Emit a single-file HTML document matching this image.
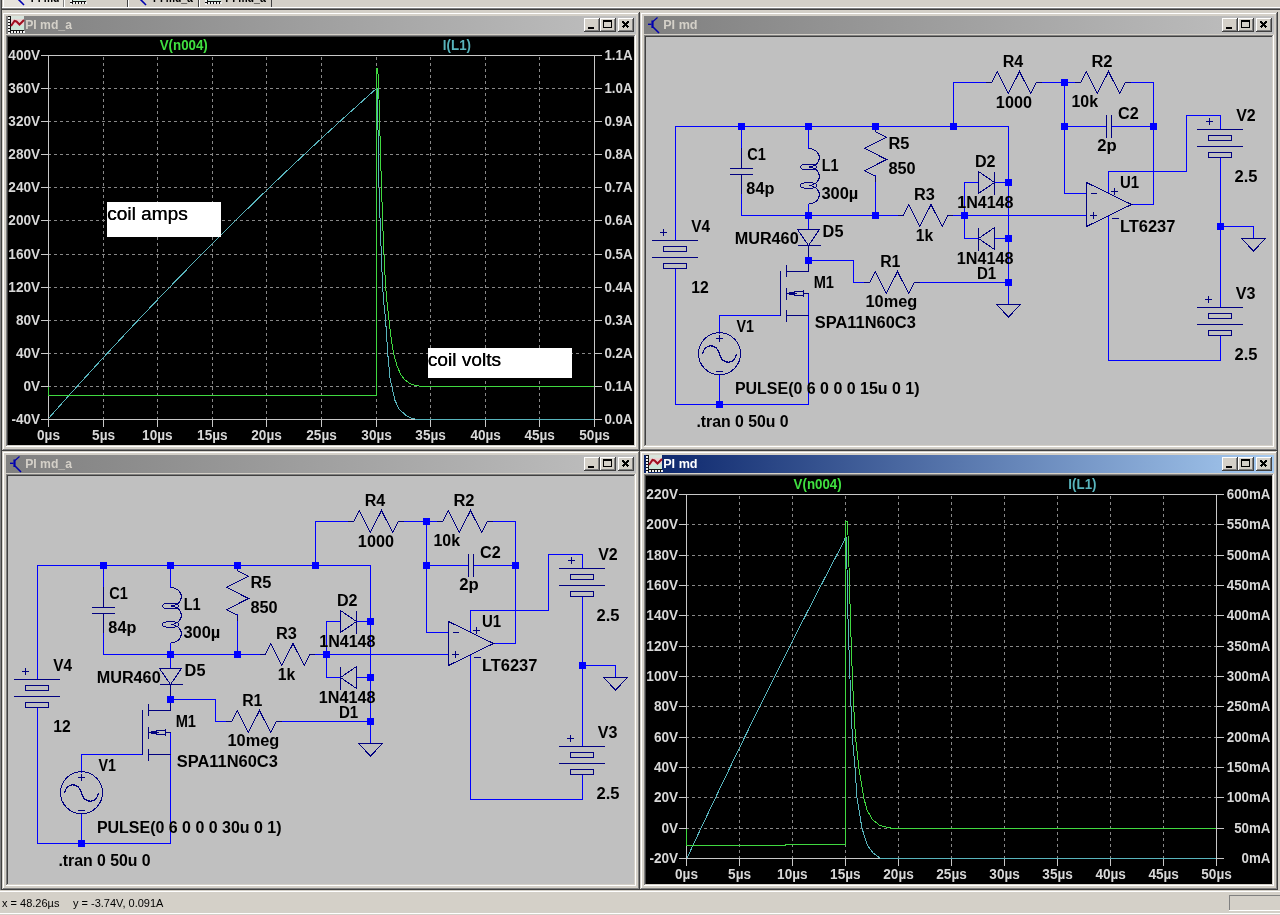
<!DOCTYPE html><html><head><meta charset="utf-8"><title>LTspice</title><style>html,body{margin:0;padding:0;width:1280px;height:915px;overflow:hidden;background:#d4d0c8;}svg text{font-family:"Liberation Sans",sans-serif;}</style></head><body><div style="position:absolute;left:0;top:0;width:1280px;height:915px;will-change:transform"><svg width="1280" height="915" viewBox="0 0 1280 915" shape-rendering="crispEdges" font-family='"Liberation Sans", sans-serif' style="position:absolute;left:0;top:0;display:block"><rect x="0" y="0" width="1280" height="915" fill="#d4d0c8"/><rect x="3" y="0" width="61" height="7" fill="#e6e3dd"/><rect x="3" y="0" width="1" height="7" fill="#ffffff"/><rect x="63" y="0" width="1" height="7" fill="#808080"/><rect x="64" y="0" width="64" height="7" fill="#d4d0c8"/><rect x="64" y="0" width="1" height="7" fill="#ffffff"/><rect x="127" y="0" width="1" height="7" fill="#404040"/><rect x="128" y="0" width="71" height="7" fill="#d4d0c8"/><rect x="128" y="0" width="1" height="7" fill="#ffffff"/><rect x="198" y="0" width="1" height="7" fill="#404040"/><rect x="199" y="0" width="73" height="7" fill="#d4d0c8"/><rect x="199" y="0" width="1" height="7" fill="#ffffff"/><rect x="271" y="0" width="1" height="7" fill="#404040"/><rect x="2" y="7" width="1278" height="1" fill="#ffffff"/><rect x="2" y="8" width="1278" height="1" fill="#808080"/><rect x="0" y="9" width="1280" height="1" fill="#404040"/><rect x="0" y="0" width="1" height="892" fill="#808080"/><rect x="1" y="0" width="1" height="892" fill="#404040"/><g transform="translate(13,-11)" fill="none" stroke="#0000b0" shape-rendering="auto"><path d="M9.5 0.5 L5 4.5" stroke-width="1.2"/><path d="M4.5 3.5 L4.5 11" stroke-width="2.2"/><path d="M5 10 L11 16" stroke-width="1.6"/><path d="M0 7.3 L3.5 7.3" stroke-width="1.4"/></g><text x="30.80" y="2.00" font-size="12" fill="#000" font-weight="bold" textLength="28.59" lengthAdjust="spacingAndGlyphs">PI md</text><g transform="translate(70,-13)" shape-rendering="crispEdges"><rect x="0" y="0" width="16" height="17" fill="#101010"/><rect x="3" y="0" width="13" height="14" fill="#e8d4d4"/><rect x="3" y="0" width="13" height="3" fill="#d8e4dc"/><rect x="3" y="9" width="13" height="5" fill="#cce6d8"/><rect x="0" y="1" width="2" height="2" fill="#f0f0f0"/><rect x="0" y="4" width="2" height="2" fill="#f0f0f0"/><rect x="0" y="7" width="2" height="2" fill="#f0f0f0"/><rect x="0" y="10" width="2" height="2" fill="#f0f0f0"/><rect x="0" y="13" width="2" height="2" fill="#f0f0f0"/><rect x="0" y="16" width="2" height="2" fill="#f0f0f0"/><rect x="3" y="15" width="2" height="2" fill="#f0f0f0"/><rect x="6" y="15" width="2" height="2" fill="#f0f0f0"/><rect x="9" y="15" width="2" height="2" fill="#f0f0f0"/><rect x="12" y="15" width="2" height="2" fill="#f0f0f0"/><rect x="15" y="15" width="2" height="2" fill="#f0f0f0"/></g><polyline points="73,-3 76.5,-8 78.5,-7.5 81.5,-4.5 86,-9" fill="none" stroke="#a01020" stroke-width="2" shape-rendering="auto"/><g transform="translate(135,-11)" fill="none" stroke="#0000b0" shape-rendering="auto"><path d="M9.5 0.5 L5 4.5" stroke-width="1.2"/><path d="M4.5 3.5 L4.5 11" stroke-width="2.2"/><path d="M5 10 L11 16" stroke-width="1.6"/><path d="M0 7.3 L3.5 7.3" stroke-width="1.4"/></g><text x="152.95" y="2.00" font-size="12" fill="#000" font-weight="bold" textLength="39.98" lengthAdjust="spacingAndGlyphs">PI md_a</text><g transform="translate(205,-13)" shape-rendering="crispEdges"><rect x="0" y="0" width="16" height="17" fill="#101010"/><rect x="3" y="0" width="13" height="14" fill="#e8d4d4"/><rect x="3" y="0" width="13" height="3" fill="#d8e4dc"/><rect x="3" y="9" width="13" height="5" fill="#cce6d8"/><rect x="0" y="1" width="2" height="2" fill="#f0f0f0"/><rect x="0" y="4" width="2" height="2" fill="#f0f0f0"/><rect x="0" y="7" width="2" height="2" fill="#f0f0f0"/><rect x="0" y="10" width="2" height="2" fill="#f0f0f0"/><rect x="0" y="13" width="2" height="2" fill="#f0f0f0"/><rect x="0" y="16" width="2" height="2" fill="#f0f0f0"/><rect x="3" y="15" width="2" height="2" fill="#f0f0f0"/><rect x="6" y="15" width="2" height="2" fill="#f0f0f0"/><rect x="9" y="15" width="2" height="2" fill="#f0f0f0"/><rect x="12" y="15" width="2" height="2" fill="#f0f0f0"/><rect x="15" y="15" width="2" height="2" fill="#f0f0f0"/></g><polyline points="208,-3 211.5,-8 213.5,-7.5 216.5,-4.5 221,-9" fill="none" stroke="#a01020" stroke-width="2" shape-rendering="auto"/><text x="225.20" y="2.00" font-size="12" fill="#000" font-weight="bold" textLength="40.73" lengthAdjust="spacingAndGlyphs">PI md_a</text><defs><linearGradient id="ga" x1="0" x2="1" y1="0" y2="0"><stop offset="0" stop-color="#0a246a"/><stop offset="1" stop-color="#a6caf0"/></linearGradient><linearGradient id="gi" x1="0" x2="1" y1="0" y2="0"><stop offset="0" stop-color="#808080"/><stop offset="1" stop-color="#c0c0c0"/></linearGradient></defs><rect x="2" y="12" width="638" height="439" fill="#d4d0c8"/><rect x="2" y="12" width="638" height="1" fill="#d4d0c8"/><rect x="2" y="12" width="1" height="439" fill="#d4d0c8"/><rect x="3" y="13" width="636" height="1" fill="#ffffff"/><rect x="3" y="13" width="1" height="437" fill="#ffffff"/><rect x="2" y="450" width="638" height="1" fill="#404040"/><rect x="639" y="12" width="1" height="439" fill="#404040"/><rect x="3" y="449" width="636" height="1" fill="#808080"/><rect x="638" y="13" width="1" height="437" fill="#808080"/><rect x="6" y="16" width="630" height="18" fill="url(#gi)"/><g transform="translate(8,16)" shape-rendering="crispEdges"><rect x="0" y="0" width="16" height="17" fill="#101010"/><rect x="3" y="0" width="13" height="14" fill="#e8d4d4"/><rect x="3" y="0" width="13" height="3" fill="#d8e4dc"/><rect x="3" y="9" width="13" height="5" fill="#cce6d8"/><rect x="0" y="1" width="2" height="2" fill="#f0f0f0"/><rect x="0" y="4" width="2" height="2" fill="#f0f0f0"/><rect x="0" y="7" width="2" height="2" fill="#f0f0f0"/><rect x="0" y="10" width="2" height="2" fill="#f0f0f0"/><rect x="0" y="13" width="2" height="2" fill="#f0f0f0"/><rect x="0" y="16" width="2" height="2" fill="#f0f0f0"/><rect x="3" y="15" width="2" height="2" fill="#f0f0f0"/><rect x="6" y="15" width="2" height="2" fill="#f0f0f0"/><rect x="9" y="15" width="2" height="2" fill="#f0f0f0"/><rect x="12" y="15" width="2" height="2" fill="#f0f0f0"/><rect x="15" y="15" width="2" height="2" fill="#f0f0f0"/></g><polyline points="11,26 14.5,21 16.5,21.5 19.5,24.5 24,20" fill="none" stroke="#a01020" stroke-width="2" shape-rendering="auto"/><text x="25.20" y="29.00" font-size="12" fill="#d4d0c8" font-weight="bold" textLength="46.73" lengthAdjust="spacingAndGlyphs">PI md_a</text><rect x="584" y="18" width="16" height="14" fill="#d4d0c8"/><rect x="584" y="18" width="16" height="1" fill="#ffffff"/><rect x="584" y="18" width="1" height="14" fill="#ffffff"/><rect x="584" y="31" width="16" height="1" fill="#404040"/><rect x="599" y="18" width="1" height="14" fill="#404040"/><rect x="585" y="30" width="14" height="1" fill="#808080"/><rect x="598" y="19" width="1" height="12" fill="#808080"/><rect x="588" y="27" width="6" height="2" fill="#000"/><rect x="600" y="18" width="16" height="14" fill="#d4d0c8"/><rect x="600" y="18" width="16" height="1" fill="#ffffff"/><rect x="600" y="18" width="1" height="14" fill="#ffffff"/><rect x="600" y="31" width="16" height="1" fill="#404040"/><rect x="615" y="18" width="1" height="14" fill="#404040"/><rect x="601" y="30" width="14" height="1" fill="#808080"/><rect x="614" y="19" width="1" height="12" fill="#808080"/><rect x="603.5" y="20.5" width="8" height="7" fill="none" stroke="#000" stroke-width="1"/><rect x="603" y="20" width="9" height="2" fill="#000"/><rect x="618" y="18" width="16" height="14" fill="#d4d0c8"/><rect x="618" y="18" width="16" height="1" fill="#ffffff"/><rect x="618" y="18" width="1" height="14" fill="#ffffff"/><rect x="618" y="31" width="16" height="1" fill="#404040"/><rect x="633" y="18" width="1" height="14" fill="#404040"/><rect x="619" y="30" width="14" height="1" fill="#808080"/><rect x="632" y="19" width="1" height="12" fill="#808080"/><path d="M622.5 21.5 L628.5 27.5 M628.5 21.5 L622.5 27.5" stroke="#000" stroke-width="1.5"/><rect x="6" y="35" width="630" height="1" fill="#808080"/><rect x="6" y="35" width="1" height="412" fill="#808080"/><rect x="7" y="36" width="628" height="1" fill="#404040"/><rect x="7" y="36" width="1" height="410" fill="#404040"/><rect x="6" y="446" width="630" height="1" fill="#ffffff"/><rect x="635" y="35" width="1" height="412" fill="#ffffff"/><rect x="7" y="445" width="628" height="1" fill="#d4d0c8"/><rect x="634" y="36" width="1" height="410" fill="#d4d0c8"/><rect x="640" y="12" width="638" height="439" fill="#d4d0c8"/><rect x="640" y="12" width="638" height="1" fill="#d4d0c8"/><rect x="640" y="12" width="1" height="439" fill="#d4d0c8"/><rect x="641" y="13" width="636" height="1" fill="#ffffff"/><rect x="641" y="13" width="1" height="437" fill="#ffffff"/><rect x="640" y="450" width="638" height="1" fill="#404040"/><rect x="1277" y="12" width="1" height="439" fill="#404040"/><rect x="641" y="449" width="636" height="1" fill="#808080"/><rect x="1276" y="13" width="1" height="437" fill="#808080"/><rect x="644" y="16" width="630" height="18" fill="url(#gi)"/><g transform="translate(648,17)" fill="none" stroke="#0000b0" shape-rendering="auto"><path d="M9.5 0.5 L5 4.5" stroke-width="1.2"/><path d="M4.5 3.5 L4.5 11" stroke-width="2.2"/><path d="M5 10 L11 16" stroke-width="1.6"/><path d="M0 7.3 L3.5 7.3" stroke-width="1.4"/></g><text x="663.20" y="29.00" font-size="12" fill="#d4d0c8" font-weight="bold" textLength="34.39" lengthAdjust="spacingAndGlyphs">PI md</text><rect x="1222" y="18" width="16" height="14" fill="#d4d0c8"/><rect x="1222" y="18" width="16" height="1" fill="#ffffff"/><rect x="1222" y="18" width="1" height="14" fill="#ffffff"/><rect x="1222" y="31" width="16" height="1" fill="#404040"/><rect x="1237" y="18" width="1" height="14" fill="#404040"/><rect x="1223" y="30" width="14" height="1" fill="#808080"/><rect x="1236" y="19" width="1" height="12" fill="#808080"/><rect x="1226" y="27" width="6" height="2" fill="#000"/><rect x="1238" y="18" width="16" height="14" fill="#d4d0c8"/><rect x="1238" y="18" width="16" height="1" fill="#ffffff"/><rect x="1238" y="18" width="1" height="14" fill="#ffffff"/><rect x="1238" y="31" width="16" height="1" fill="#404040"/><rect x="1253" y="18" width="1" height="14" fill="#404040"/><rect x="1239" y="30" width="14" height="1" fill="#808080"/><rect x="1252" y="19" width="1" height="12" fill="#808080"/><rect x="1241.5" y="20.5" width="8" height="7" fill="none" stroke="#000" stroke-width="1"/><rect x="1241" y="20" width="9" height="2" fill="#000"/><rect x="1256" y="18" width="16" height="14" fill="#d4d0c8"/><rect x="1256" y="18" width="16" height="1" fill="#ffffff"/><rect x="1256" y="18" width="1" height="14" fill="#ffffff"/><rect x="1256" y="31" width="16" height="1" fill="#404040"/><rect x="1271" y="18" width="1" height="14" fill="#404040"/><rect x="1257" y="30" width="14" height="1" fill="#808080"/><rect x="1270" y="19" width="1" height="12" fill="#808080"/><path d="M1260.5 21.5 L1266.5 27.5 M1266.5 21.5 L1260.5 27.5" stroke="#000" stroke-width="1.5"/><rect x="644" y="35" width="630" height="1" fill="#808080"/><rect x="644" y="35" width="1" height="412" fill="#808080"/><rect x="645" y="36" width="628" height="1" fill="#404040"/><rect x="645" y="36" width="1" height="410" fill="#404040"/><rect x="644" y="446" width="630" height="1" fill="#ffffff"/><rect x="1273" y="35" width="1" height="412" fill="#ffffff"/><rect x="645" y="445" width="628" height="1" fill="#d4d0c8"/><rect x="1272" y="36" width="1" height="410" fill="#d4d0c8"/><rect x="2" y="451" width="638" height="439" fill="#d4d0c8"/><rect x="2" y="451" width="638" height="1" fill="#d4d0c8"/><rect x="2" y="451" width="1" height="439" fill="#d4d0c8"/><rect x="3" y="452" width="636" height="1" fill="#ffffff"/><rect x="3" y="452" width="1" height="437" fill="#ffffff"/><rect x="2" y="889" width="638" height="1" fill="#404040"/><rect x="639" y="451" width="1" height="439" fill="#404040"/><rect x="3" y="888" width="636" height="1" fill="#808080"/><rect x="638" y="452" width="1" height="437" fill="#808080"/><rect x="6" y="455" width="630" height="18" fill="url(#gi)"/><g transform="translate(10,456)" fill="none" stroke="#0000b0" shape-rendering="auto"><path d="M9.5 0.5 L5 4.5" stroke-width="1.2"/><path d="M4.5 3.5 L4.5 11" stroke-width="2.2"/><path d="M5 10 L11 16" stroke-width="1.6"/><path d="M0 7.3 L3.5 7.3" stroke-width="1.4"/></g><text x="25.20" y="468.00" font-size="12" fill="#d4d0c8" font-weight="bold" textLength="46.73" lengthAdjust="spacingAndGlyphs">PI md_a</text><rect x="584" y="457" width="16" height="14" fill="#d4d0c8"/><rect x="584" y="457" width="16" height="1" fill="#ffffff"/><rect x="584" y="457" width="1" height="14" fill="#ffffff"/><rect x="584" y="470" width="16" height="1" fill="#404040"/><rect x="599" y="457" width="1" height="14" fill="#404040"/><rect x="585" y="469" width="14" height="1" fill="#808080"/><rect x="598" y="458" width="1" height="12" fill="#808080"/><rect x="588" y="466" width="6" height="2" fill="#000"/><rect x="600" y="457" width="16" height="14" fill="#d4d0c8"/><rect x="600" y="457" width="16" height="1" fill="#ffffff"/><rect x="600" y="457" width="1" height="14" fill="#ffffff"/><rect x="600" y="470" width="16" height="1" fill="#404040"/><rect x="615" y="457" width="1" height="14" fill="#404040"/><rect x="601" y="469" width="14" height="1" fill="#808080"/><rect x="614" y="458" width="1" height="12" fill="#808080"/><rect x="603.5" y="459.5" width="8" height="7" fill="none" stroke="#000" stroke-width="1"/><rect x="603" y="459" width="9" height="2" fill="#000"/><rect x="618" y="457" width="16" height="14" fill="#d4d0c8"/><rect x="618" y="457" width="16" height="1" fill="#ffffff"/><rect x="618" y="457" width="1" height="14" fill="#ffffff"/><rect x="618" y="470" width="16" height="1" fill="#404040"/><rect x="633" y="457" width="1" height="14" fill="#404040"/><rect x="619" y="469" width="14" height="1" fill="#808080"/><rect x="632" y="458" width="1" height="12" fill="#808080"/><path d="M622.5 460.5 L628.5 466.5 M628.5 460.5 L622.5 466.5" stroke="#000" stroke-width="1.5"/><rect x="6" y="474" width="630" height="1" fill="#808080"/><rect x="6" y="474" width="1" height="412" fill="#808080"/><rect x="7" y="475" width="628" height="1" fill="#404040"/><rect x="7" y="475" width="1" height="410" fill="#404040"/><rect x="6" y="885" width="630" height="1" fill="#ffffff"/><rect x="635" y="474" width="1" height="412" fill="#ffffff"/><rect x="7" y="884" width="628" height="1" fill="#d4d0c8"/><rect x="634" y="475" width="1" height="410" fill="#d4d0c8"/><rect x="640" y="451" width="638" height="439" fill="#d4d0c8"/><rect x="640" y="451" width="638" height="1" fill="#d4d0c8"/><rect x="640" y="451" width="1" height="439" fill="#d4d0c8"/><rect x="641" y="452" width="636" height="1" fill="#ffffff"/><rect x="641" y="452" width="1" height="437" fill="#ffffff"/><rect x="640" y="889" width="638" height="1" fill="#404040"/><rect x="1277" y="451" width="1" height="439" fill="#404040"/><rect x="641" y="888" width="636" height="1" fill="#808080"/><rect x="1276" y="452" width="1" height="437" fill="#808080"/><rect x="644" y="455" width="630" height="18" fill="url(#ga)"/><g transform="translate(646,455)" shape-rendering="crispEdges"><rect x="0" y="0" width="16" height="17" fill="#101010"/><rect x="3" y="0" width="13" height="14" fill="#e8d4d4"/><rect x="3" y="0" width="13" height="3" fill="#d8e4dc"/><rect x="3" y="9" width="13" height="5" fill="#cce6d8"/><rect x="0" y="1" width="2" height="2" fill="#f0f0f0"/><rect x="0" y="4" width="2" height="2" fill="#f0f0f0"/><rect x="0" y="7" width="2" height="2" fill="#f0f0f0"/><rect x="0" y="10" width="2" height="2" fill="#f0f0f0"/><rect x="0" y="13" width="2" height="2" fill="#f0f0f0"/><rect x="0" y="16" width="2" height="2" fill="#f0f0f0"/><rect x="3" y="15" width="2" height="2" fill="#f0f0f0"/><rect x="6" y="15" width="2" height="2" fill="#f0f0f0"/><rect x="9" y="15" width="2" height="2" fill="#f0f0f0"/><rect x="12" y="15" width="2" height="2" fill="#f0f0f0"/><rect x="15" y="15" width="2" height="2" fill="#f0f0f0"/></g><polyline points="649,465 652.5,460 654.5,460.5 657.5,463.5 662,459" fill="none" stroke="#a01020" stroke-width="2" shape-rendering="auto"/><text x="663.20" y="468.00" font-size="12" fill="#ffffff" font-weight="bold" textLength="34.39" lengthAdjust="spacingAndGlyphs">PI md</text><rect x="1222" y="457" width="16" height="14" fill="#d4d0c8"/><rect x="1222" y="457" width="16" height="1" fill="#ffffff"/><rect x="1222" y="457" width="1" height="14" fill="#ffffff"/><rect x="1222" y="470" width="16" height="1" fill="#404040"/><rect x="1237" y="457" width="1" height="14" fill="#404040"/><rect x="1223" y="469" width="14" height="1" fill="#808080"/><rect x="1236" y="458" width="1" height="12" fill="#808080"/><rect x="1226" y="466" width="6" height="2" fill="#000"/><rect x="1238" y="457" width="16" height="14" fill="#d4d0c8"/><rect x="1238" y="457" width="16" height="1" fill="#ffffff"/><rect x="1238" y="457" width="1" height="14" fill="#ffffff"/><rect x="1238" y="470" width="16" height="1" fill="#404040"/><rect x="1253" y="457" width="1" height="14" fill="#404040"/><rect x="1239" y="469" width="14" height="1" fill="#808080"/><rect x="1252" y="458" width="1" height="12" fill="#808080"/><rect x="1241.5" y="459.5" width="8" height="7" fill="none" stroke="#000" stroke-width="1"/><rect x="1241" y="459" width="9" height="2" fill="#000"/><rect x="1256" y="457" width="16" height="14" fill="#d4d0c8"/><rect x="1256" y="457" width="16" height="1" fill="#ffffff"/><rect x="1256" y="457" width="1" height="14" fill="#ffffff"/><rect x="1256" y="470" width="16" height="1" fill="#404040"/><rect x="1271" y="457" width="1" height="14" fill="#404040"/><rect x="1257" y="469" width="14" height="1" fill="#808080"/><rect x="1270" y="458" width="1" height="12" fill="#808080"/><path d="M1260.5 460.5 L1266.5 466.5 M1266.5 460.5 L1260.5 466.5" stroke="#000" stroke-width="1.5"/><rect x="644" y="474" width="630" height="1" fill="#808080"/><rect x="644" y="474" width="1" height="412" fill="#808080"/><rect x="645" y="475" width="628" height="1" fill="#404040"/><rect x="645" y="475" width="1" height="410" fill="#404040"/><rect x="644" y="885" width="630" height="1" fill="#ffffff"/><rect x="1273" y="474" width="1" height="412" fill="#ffffff"/><rect x="645" y="884" width="628" height="1" fill="#d4d0c8"/><rect x="1272" y="475" width="1" height="410" fill="#d4d0c8"/><rect x="8" y="37" width="626" height="408" fill="#000"/><line x1="48" y1="88.5" x2="594" y2="88.5" stroke="#888888" stroke-dasharray="3 3"/><line x1="48" y1="121.5" x2="594" y2="121.5" stroke="#888888" stroke-dasharray="3 3"/><line x1="48" y1="154.5" x2="594" y2="154.5" stroke="#888888" stroke-dasharray="3 3"/><line x1="48" y1="187.5" x2="594" y2="187.5" stroke="#888888" stroke-dasharray="3 3"/><line x1="48" y1="220.5" x2="594" y2="220.5" stroke="#888888" stroke-dasharray="3 3"/><line x1="48" y1="254.5" x2="594" y2="254.5" stroke="#888888" stroke-dasharray="3 3"/><line x1="48" y1="287.5" x2="594" y2="287.5" stroke="#888888" stroke-dasharray="3 3"/><line x1="48" y1="320.5" x2="594" y2="320.5" stroke="#888888" stroke-dasharray="3 3"/><line x1="48" y1="353.5" x2="594" y2="353.5" stroke="#888888" stroke-dasharray="3 3"/><line x1="48" y1="386.5" x2="594" y2="386.5" stroke="#888888" stroke-dasharray="3 3"/><line x1="103.5" y1="57" x2="103.5" y2="419" stroke="#888888" stroke-dasharray="3 3"/><line x1="157.5" y1="57" x2="157.5" y2="419" stroke="#888888" stroke-dasharray="3 3"/><line x1="212.5" y1="57" x2="212.5" y2="419" stroke="#888888" stroke-dasharray="3 3"/><line x1="266.5" y1="57" x2="266.5" y2="419" stroke="#888888" stroke-dasharray="3 3"/><line x1="321.5" y1="57" x2="321.5" y2="419" stroke="#888888" stroke-dasharray="3 3"/><line x1="376.5" y1="57" x2="376.5" y2="419" stroke="#888888" stroke-dasharray="3 3"/><line x1="430.5" y1="57" x2="430.5" y2="419" stroke="#888888" stroke-dasharray="3 3"/><line x1="485.5" y1="57" x2="485.5" y2="419" stroke="#888888" stroke-dasharray="3 3"/><line x1="539.5" y1="57" x2="539.5" y2="419" stroke="#888888" stroke-dasharray="3 3"/><rect x="48" y="55" width="547" height="1" fill="#c8c8c8"/><rect x="48" y="419" width="547" height="1" fill="#c8c8c8"/><rect x="48" y="55" width="1" height="365" fill="#c8c8c8"/><rect x="594" y="55" width="1" height="365" fill="#c8c8c8"/><rect x="41" y="55" width="7" height="1" fill="#c8c8c8"/><text x="8.37" y="60.00" font-size="14" fill="#d8d8d8" font-weight="bold" textLength="31.72" lengthAdjust="spacingAndGlyphs">400V</text><rect x="41" y="88" width="7" height="1" fill="#c8c8c8"/><text x="8.37" y="93.00" font-size="14" fill="#d8d8d8" font-weight="bold" textLength="31.73" lengthAdjust="spacingAndGlyphs">360V</text><rect x="41" y="121" width="7" height="1" fill="#c8c8c8"/><text x="8.37" y="126.00" font-size="14" fill="#d8d8d8" font-weight="bold" textLength="31.73" lengthAdjust="spacingAndGlyphs">320V</text><rect x="41" y="154" width="7" height="1" fill="#c8c8c8"/><text x="8.36" y="159.00" font-size="14" fill="#d8d8d8" font-weight="bold" textLength="31.73" lengthAdjust="spacingAndGlyphs">280V</text><rect x="41" y="187" width="7" height="1" fill="#c8c8c8"/><text x="8.36" y="192.00" font-size="14" fill="#d8d8d8" font-weight="bold" textLength="31.73" lengthAdjust="spacingAndGlyphs">240V</text><rect x="41" y="220" width="7" height="1" fill="#c8c8c8"/><text x="8.36" y="225.00" font-size="14" fill="#d8d8d8" font-weight="bold" textLength="31.73" lengthAdjust="spacingAndGlyphs">200V</text><rect x="41" y="254" width="7" height="1" fill="#c8c8c8"/><text x="8.35" y="259.00" font-size="14" fill="#d8d8d8" font-weight="bold" textLength="31.74" lengthAdjust="spacingAndGlyphs">160V</text><rect x="41" y="287" width="7" height="1" fill="#c8c8c8"/><text x="8.35" y="292.00" font-size="14" fill="#d8d8d8" font-weight="bold" textLength="31.74" lengthAdjust="spacingAndGlyphs">120V</text><rect x="41" y="320" width="7" height="1" fill="#c8c8c8"/><text x="15.92" y="325.00" font-size="14" fill="#d8d8d8" font-weight="bold" textLength="24.18" lengthAdjust="spacingAndGlyphs">80V</text><rect x="41" y="353" width="7" height="1" fill="#c8c8c8"/><text x="15.92" y="358.00" font-size="14" fill="#d8d8d8" font-weight="bold" textLength="24.17" lengthAdjust="spacingAndGlyphs">40V</text><rect x="41" y="386" width="7" height="1" fill="#c8c8c8"/><text x="23.47" y="391.00" font-size="14" fill="#d8d8d8" font-weight="bold" textLength="16.63" lengthAdjust="spacingAndGlyphs">0V</text><rect x="41" y="419" width="7" height="1" fill="#c8c8c8"/><text x="11.39" y="424.00" font-size="14" fill="#d8d8d8" font-weight="bold" textLength="28.70" lengthAdjust="spacingAndGlyphs">-40V</text><rect x="595" y="55" width="7" height="1" fill="#c8c8c8"/><text x="604.43" y="60.00" font-size="14" fill="#d8d8d8" font-weight="bold" textLength="28.17" lengthAdjust="spacingAndGlyphs">1.1A</text><rect x="595" y="88" width="7" height="1" fill="#c8c8c8"/><text x="604.43" y="93.00" font-size="14" fill="#d8d8d8" font-weight="bold" textLength="28.17" lengthAdjust="spacingAndGlyphs">1.0A</text><rect x="595" y="121" width="7" height="1" fill="#c8c8c8"/><text x="604.45" y="126.00" font-size="14" fill="#d8d8d8" font-weight="bold" textLength="28.16" lengthAdjust="spacingAndGlyphs">0.9A</text><rect x="595" y="154" width="7" height="1" fill="#c8c8c8"/><text x="604.45" y="159.00" font-size="14" fill="#d8d8d8" font-weight="bold" textLength="28.16" lengthAdjust="spacingAndGlyphs">0.8A</text><rect x="595" y="187" width="7" height="1" fill="#c8c8c8"/><text x="604.45" y="192.00" font-size="14" fill="#d8d8d8" font-weight="bold" textLength="28.16" lengthAdjust="spacingAndGlyphs">0.7A</text><rect x="595" y="220" width="7" height="1" fill="#c8c8c8"/><text x="604.45" y="225.00" font-size="14" fill="#d8d8d8" font-weight="bold" textLength="28.16" lengthAdjust="spacingAndGlyphs">0.6A</text><rect x="595" y="254" width="7" height="1" fill="#c8c8c8"/><text x="604.45" y="259.00" font-size="14" fill="#d8d8d8" font-weight="bold" textLength="28.16" lengthAdjust="spacingAndGlyphs">0.5A</text><rect x="595" y="287" width="7" height="1" fill="#c8c8c8"/><text x="604.45" y="292.00" font-size="14" fill="#d8d8d8" font-weight="bold" textLength="28.16" lengthAdjust="spacingAndGlyphs">0.4A</text><rect x="595" y="320" width="7" height="1" fill="#c8c8c8"/><text x="604.45" y="325.00" font-size="14" fill="#d8d8d8" font-weight="bold" textLength="28.16" lengthAdjust="spacingAndGlyphs">0.3A</text><rect x="595" y="353" width="7" height="1" fill="#c8c8c8"/><text x="604.45" y="358.00" font-size="14" fill="#d8d8d8" font-weight="bold" textLength="28.16" lengthAdjust="spacingAndGlyphs">0.2A</text><rect x="595" y="386" width="7" height="1" fill="#c8c8c8"/><text x="604.45" y="391.00" font-size="14" fill="#d8d8d8" font-weight="bold" textLength="28.16" lengthAdjust="spacingAndGlyphs">0.1A</text><rect x="595" y="419" width="7" height="1" fill="#c8c8c8"/><text x="604.45" y="424.00" font-size="14" fill="#d8d8d8" font-weight="bold" textLength="28.16" lengthAdjust="spacingAndGlyphs">0.0A</text><rect x="48" y="420" width="1" height="7" fill="#c8c8c8"/><text x="37.03" y="440.00" font-size="14" fill="#d8d8d8" font-weight="bold" textLength="22.96" lengthAdjust="spacingAndGlyphs">0µs</text><rect x="103" y="420" width="1" height="7" fill="#c8c8c8"/><text x="92.09" y="440.00" font-size="14" fill="#d8d8d8" font-weight="bold" textLength="22.96" lengthAdjust="spacingAndGlyphs">5µs</text><rect x="157" y="420" width="1" height="7" fill="#c8c8c8"/><text x="142.08" y="440.00" font-size="14" fill="#d8d8d8" font-weight="bold" textLength="30.53" lengthAdjust="spacingAndGlyphs">10µs</text><rect x="212" y="420" width="1" height="7" fill="#c8c8c8"/><text x="197.08" y="440.00" font-size="14" fill="#d8d8d8" font-weight="bold" textLength="30.53" lengthAdjust="spacingAndGlyphs">15µs</text><rect x="266" y="420" width="1" height="7" fill="#c8c8c8"/><text x="251.29" y="440.00" font-size="14" fill="#d8d8d8" font-weight="bold" textLength="30.51" lengthAdjust="spacingAndGlyphs">20µs</text><rect x="321" y="420" width="1" height="7" fill="#c8c8c8"/><text x="306.29" y="440.00" font-size="14" fill="#d8d8d8" font-weight="bold" textLength="30.51" lengthAdjust="spacingAndGlyphs">25µs</text><rect x="376" y="420" width="1" height="7" fill="#c8c8c8"/><text x="361.37" y="440.00" font-size="14" fill="#d8d8d8" font-weight="bold" textLength="30.51" lengthAdjust="spacingAndGlyphs">30µs</text><rect x="430" y="420" width="1" height="7" fill="#c8c8c8"/><text x="415.37" y="440.00" font-size="14" fill="#d8d8d8" font-weight="bold" textLength="30.51" lengthAdjust="spacingAndGlyphs">35µs</text><rect x="485" y="420" width="1" height="7" fill="#c8c8c8"/><text x="470.43" y="440.00" font-size="14" fill="#d8d8d8" font-weight="bold" textLength="30.51" lengthAdjust="spacingAndGlyphs">40µs</text><rect x="539" y="420" width="1" height="7" fill="#c8c8c8"/><text x="524.43" y="440.00" font-size="14" fill="#d8d8d8" font-weight="bold" textLength="30.51" lengthAdjust="spacingAndGlyphs">45µs</text><rect x="594" y="420" width="1" height="7" fill="#c8c8c8"/><text x="579.32" y="440.00" font-size="14" fill="#d8d8d8" font-weight="bold" textLength="30.51" lengthAdjust="spacingAndGlyphs">50µs</text><text x="159.70" y="49.70" font-size="14" fill="#40e040" font-weight="bold" textLength="48.09" lengthAdjust="spacingAndGlyphs">V(n004)</text><text x="442.86" y="49.90" font-size="14" fill="#58b4bc" font-weight="bold" textLength="28.13" lengthAdjust="spacingAndGlyphs">I(L1)</text><polyline points="48.50,418.50 52.50,413.97 56.50,409.46 60.50,404.96 64.50,400.47 68.50,396.00 72.50,391.54 76.50,387.09 80.50,382.66 84.50,378.24 88.50,373.83 92.50,369.44 96.50,365.06 100.50,360.69 104.50,356.33 108.50,351.99 112.50,347.66 116.50,343.34 120.50,339.04 124.50,334.75 128.50,330.47 132.50,326.20 136.50,321.95 140.50,317.71 144.50,313.48 148.50,309.26 152.50,305.06 156.50,300.87 160.50,296.69 164.50,292.52 168.50,288.37 172.50,284.23 176.50,280.10 180.50,275.98 184.50,271.88 188.50,267.78 192.50,263.70 196.50,259.63 200.50,255.58 204.50,251.53 208.50,247.50 212.50,243.48 216.50,239.47 220.50,235.47 224.50,231.49 228.50,227.52 232.50,223.55 236.50,219.60 240.50,215.67 244.50,211.74 248.50,207.82 252.50,203.92 256.50,200.03 260.50,196.15 264.50,192.28 268.50,188.42 272.50,184.58 276.50,180.74 280.50,176.92 284.50,173.11 288.50,169.31 292.50,165.52 296.50,161.74 300.50,157.97 304.50,154.22 308.50,150.47 312.50,146.74 316.50,143.02 320.50,139.30 324.50,135.60 328.50,131.91 332.50,128.23 336.50,124.57 340.50,120.91 344.50,117.26 348.50,113.63 352.50,110.00 356.50,106.39 360.50,102.79 364.50,99.19 368.50,95.61 372.50,92.04 376.50,88.48 376.50,88.50 377.50,88.50 378.50,169.00 379.50,204.00 380.50,232.00 381.50,260.00 382.50,283.00 383.50,300.00 385.60,320.00 387.70,353.00 390.00,378.00 394.80,400.00 399.00,409.00 405.50,415.00 411.00,418.00 416.80,419.50 594.00,419.50" fill="none" stroke="#58b4bc" stroke-width="1" stroke-linejoin="miter"/><polyline points="48.50,386.50 48.50,395.50 376.50,395.50 376.50,68.50 377.50,68.50 378.50,80.00 379.50,117.00 380.50,153.00 381.50,187.00 382.50,217.00 383.50,244.00 384.50,265.00 385.50,284.00 386.50,298.00 389.00,320.00 391.00,337.00 393.40,353.00 397.00,366.00 401.00,375.00 405.00,380.00 410.00,383.50 415.00,385.30 421.00,386.30 594.00,386.50" fill="none" stroke="#40d840" stroke-width="1" stroke-linejoin="miter"/><rect x="107" y="202" width="114" height="35" fill="#ffffff"/><text x="107.09" y="220.00" font-size="19" fill="#000" font-weight="normal" textLength="80.49" lengthAdjust="spacingAndGlyphs">coil amps</text><text x="107.49" y="220.00" font-size="19" fill="#000" font-weight="normal" textLength="80.49" lengthAdjust="spacingAndGlyphs">coil amps</text><rect x="428" y="348" width="144" height="30" fill="#ffffff"/><text x="427.69" y="366.00" font-size="19" fill="#000" font-weight="normal" textLength="73.19" lengthAdjust="spacingAndGlyphs">coil volts</text><text x="428.09" y="366.00" font-size="19" fill="#000" font-weight="normal" textLength="73.19" lengthAdjust="spacingAndGlyphs">coil volts</text><rect x="646" y="476" width="626" height="408" fill="#000"/><line x1="686" y1="524.5" x2="1216" y2="524.5" stroke="#888888" stroke-dasharray="3 3"/><line x1="686" y1="555.5" x2="1216" y2="555.5" stroke="#888888" stroke-dasharray="3 3"/><line x1="686" y1="585.5" x2="1216" y2="585.5" stroke="#888888" stroke-dasharray="3 3"/><line x1="686" y1="615.5" x2="1216" y2="615.5" stroke="#888888" stroke-dasharray="3 3"/><line x1="686" y1="646.5" x2="1216" y2="646.5" stroke="#888888" stroke-dasharray="3 3"/><line x1="686" y1="676.5" x2="1216" y2="676.5" stroke="#888888" stroke-dasharray="3 3"/><line x1="686" y1="706.5" x2="1216" y2="706.5" stroke="#888888" stroke-dasharray="3 3"/><line x1="686" y1="737.5" x2="1216" y2="737.5" stroke="#888888" stroke-dasharray="3 3"/><line x1="686" y1="767.5" x2="1216" y2="767.5" stroke="#888888" stroke-dasharray="3 3"/><line x1="686" y1="797.5" x2="1216" y2="797.5" stroke="#888888" stroke-dasharray="3 3"/><line x1="686" y1="828.5" x2="1216" y2="828.5" stroke="#888888" stroke-dasharray="3 3"/><line x1="739.5" y1="496" x2="739.5" y2="858" stroke="#888888" stroke-dasharray="3 3"/><line x1="792.5" y1="496" x2="792.5" y2="858" stroke="#888888" stroke-dasharray="3 3"/><line x1="845.5" y1="496" x2="845.5" y2="858" stroke="#888888" stroke-dasharray="3 3"/><line x1="898.5" y1="496" x2="898.5" y2="858" stroke="#888888" stroke-dasharray="3 3"/><line x1="951.5" y1="496" x2="951.5" y2="858" stroke="#888888" stroke-dasharray="3 3"/><line x1="1004.5" y1="496" x2="1004.5" y2="858" stroke="#888888" stroke-dasharray="3 3"/><line x1="1057.5" y1="496" x2="1057.5" y2="858" stroke="#888888" stroke-dasharray="3 3"/><line x1="1110.5" y1="496" x2="1110.5" y2="858" stroke="#888888" stroke-dasharray="3 3"/><line x1="1163.5" y1="496" x2="1163.5" y2="858" stroke="#888888" stroke-dasharray="3 3"/><rect x="686" y="494" width="531" height="1" fill="#c8c8c8"/><rect x="686" y="858" width="531" height="1" fill="#c8c8c8"/><rect x="686" y="494" width="1" height="365" fill="#c8c8c8"/><rect x="1216" y="494" width="1" height="365" fill="#c8c8c8"/><rect x="679" y="494" width="7" height="1" fill="#c8c8c8"/><text x="646.36" y="499.00" font-size="14" fill="#d8d8d8" font-weight="bold" textLength="31.73" lengthAdjust="spacingAndGlyphs">220V</text><rect x="679" y="524" width="7" height="1" fill="#c8c8c8"/><text x="646.36" y="529.00" font-size="14" fill="#d8d8d8" font-weight="bold" textLength="31.73" lengthAdjust="spacingAndGlyphs">200V</text><rect x="679" y="555" width="7" height="1" fill="#c8c8c8"/><text x="646.35" y="560.00" font-size="14" fill="#d8d8d8" font-weight="bold" textLength="31.74" lengthAdjust="spacingAndGlyphs">180V</text><rect x="679" y="585" width="7" height="1" fill="#c8c8c8"/><text x="646.35" y="590.00" font-size="14" fill="#d8d8d8" font-weight="bold" textLength="31.74" lengthAdjust="spacingAndGlyphs">160V</text><rect x="679" y="615" width="7" height="1" fill="#c8c8c8"/><text x="646.35" y="620.00" font-size="14" fill="#d8d8d8" font-weight="bold" textLength="31.74" lengthAdjust="spacingAndGlyphs">140V</text><rect x="679" y="646" width="7" height="1" fill="#c8c8c8"/><text x="646.35" y="651.00" font-size="14" fill="#d8d8d8" font-weight="bold" textLength="31.74" lengthAdjust="spacingAndGlyphs">120V</text><rect x="679" y="676" width="7" height="1" fill="#c8c8c8"/><text x="646.35" y="681.00" font-size="14" fill="#d8d8d8" font-weight="bold" textLength="31.74" lengthAdjust="spacingAndGlyphs">100V</text><rect x="679" y="706" width="7" height="1" fill="#c8c8c8"/><text x="653.92" y="711.00" font-size="14" fill="#d8d8d8" font-weight="bold" textLength="24.18" lengthAdjust="spacingAndGlyphs">80V</text><rect x="679" y="737" width="7" height="1" fill="#c8c8c8"/><text x="653.91" y="742.00" font-size="14" fill="#d8d8d8" font-weight="bold" textLength="24.18" lengthAdjust="spacingAndGlyphs">60V</text><rect x="679" y="767" width="7" height="1" fill="#c8c8c8"/><text x="653.92" y="772.00" font-size="14" fill="#d8d8d8" font-weight="bold" textLength="24.17" lengthAdjust="spacingAndGlyphs">40V</text><rect x="679" y="797" width="7" height="1" fill="#c8c8c8"/><text x="653.92" y="802.00" font-size="14" fill="#d8d8d8" font-weight="bold" textLength="24.18" lengthAdjust="spacingAndGlyphs">20V</text><rect x="679" y="828" width="7" height="1" fill="#c8c8c8"/><text x="661.47" y="833.00" font-size="14" fill="#d8d8d8" font-weight="bold" textLength="16.63" lengthAdjust="spacingAndGlyphs">0V</text><rect x="679" y="858" width="7" height="1" fill="#c8c8c8"/><text x="649.39" y="863.00" font-size="14" fill="#d8d8d8" font-weight="bold" textLength="28.70" lengthAdjust="spacingAndGlyphs">-20V</text><rect x="1217" y="494" width="7" height="1" fill="#c8c8c8"/><text x="1226.77" y="499.00" font-size="14" fill="#d8d8d8" font-weight="bold" textLength="43.69" lengthAdjust="spacingAndGlyphs">600mA</text><rect x="1217" y="524" width="7" height="1" fill="#c8c8c8"/><text x="1226.78" y="529.00" font-size="14" fill="#d8d8d8" font-weight="bold" textLength="43.69" lengthAdjust="spacingAndGlyphs">550mA</text><rect x="1217" y="555" width="7" height="1" fill="#c8c8c8"/><text x="1226.78" y="560.00" font-size="14" fill="#d8d8d8" font-weight="bold" textLength="43.69" lengthAdjust="spacingAndGlyphs">500mA</text><rect x="1217" y="585" width="7" height="1" fill="#c8c8c8"/><text x="1226.79" y="590.00" font-size="14" fill="#d8d8d8" font-weight="bold" textLength="43.68" lengthAdjust="spacingAndGlyphs">450mA</text><rect x="1217" y="615" width="7" height="1" fill="#c8c8c8"/><text x="1226.79" y="620.00" font-size="14" fill="#d8d8d8" font-weight="bold" textLength="43.68" lengthAdjust="spacingAndGlyphs">400mA</text><rect x="1217" y="646" width="7" height="1" fill="#c8c8c8"/><text x="1226.78" y="651.00" font-size="14" fill="#d8d8d8" font-weight="bold" textLength="43.68" lengthAdjust="spacingAndGlyphs">350mA</text><rect x="1217" y="676" width="7" height="1" fill="#c8c8c8"/><text x="1226.78" y="681.00" font-size="14" fill="#d8d8d8" font-weight="bold" textLength="43.68" lengthAdjust="spacingAndGlyphs">300mA</text><rect x="1217" y="706" width="7" height="1" fill="#c8c8c8"/><text x="1226.77" y="711.00" font-size="14" fill="#d8d8d8" font-weight="bold" textLength="43.69" lengthAdjust="spacingAndGlyphs">250mA</text><rect x="1217" y="737" width="7" height="1" fill="#c8c8c8"/><text x="1226.77" y="742.00" font-size="14" fill="#d8d8d8" font-weight="bold" textLength="43.69" lengthAdjust="spacingAndGlyphs">200mA</text><rect x="1217" y="767" width="7" height="1" fill="#c8c8c8"/><text x="1226.75" y="772.00" font-size="14" fill="#d8d8d8" font-weight="bold" textLength="43.71" lengthAdjust="spacingAndGlyphs">150mA</text><rect x="1217" y="797" width="7" height="1" fill="#c8c8c8"/><text x="1226.75" y="802.00" font-size="14" fill="#d8d8d8" font-weight="bold" textLength="43.71" lengthAdjust="spacingAndGlyphs">100mA</text><rect x="1217" y="828" width="7" height="1" fill="#c8c8c8"/><text x="1234.18" y="833.00" font-size="14" fill="#d8d8d8" font-weight="bold" textLength="36.29" lengthAdjust="spacingAndGlyphs">50mA</text><rect x="1217" y="858" width="7" height="1" fill="#c8c8c8"/><text x="1241.57" y="863.00" font-size="14" fill="#d8d8d8" font-weight="bold" textLength="28.89" lengthAdjust="spacingAndGlyphs">0mA</text><rect x="686" y="859" width="1" height="7" fill="#c8c8c8"/><text x="675.03" y="879.00" font-size="14" fill="#d8d8d8" font-weight="bold" textLength="22.96" lengthAdjust="spacingAndGlyphs">0µs</text><rect x="739" y="859" width="1" height="7" fill="#c8c8c8"/><text x="728.09" y="879.00" font-size="14" fill="#d8d8d8" font-weight="bold" textLength="22.96" lengthAdjust="spacingAndGlyphs">5µs</text><rect x="792" y="859" width="1" height="7" fill="#c8c8c8"/><text x="777.08" y="879.00" font-size="14" fill="#d8d8d8" font-weight="bold" textLength="30.53" lengthAdjust="spacingAndGlyphs">10µs</text><rect x="845" y="859" width="1" height="7" fill="#c8c8c8"/><text x="830.08" y="879.00" font-size="14" fill="#d8d8d8" font-weight="bold" textLength="30.53" lengthAdjust="spacingAndGlyphs">15µs</text><rect x="898" y="859" width="1" height="7" fill="#c8c8c8"/><text x="883.29" y="879.00" font-size="14" fill="#d8d8d8" font-weight="bold" textLength="30.51" lengthAdjust="spacingAndGlyphs">20µs</text><rect x="951" y="859" width="1" height="7" fill="#c8c8c8"/><text x="936.29" y="879.00" font-size="14" fill="#d8d8d8" font-weight="bold" textLength="30.51" lengthAdjust="spacingAndGlyphs">25µs</text><rect x="1004" y="859" width="1" height="7" fill="#c8c8c8"/><text x="989.37" y="879.00" font-size="14" fill="#d8d8d8" font-weight="bold" textLength="30.51" lengthAdjust="spacingAndGlyphs">30µs</text><rect x="1057" y="859" width="1" height="7" fill="#c8c8c8"/><text x="1042.37" y="879.00" font-size="14" fill="#d8d8d8" font-weight="bold" textLength="30.51" lengthAdjust="spacingAndGlyphs">35µs</text><rect x="1110" y="859" width="1" height="7" fill="#c8c8c8"/><text x="1095.43" y="879.00" font-size="14" fill="#d8d8d8" font-weight="bold" textLength="30.51" lengthAdjust="spacingAndGlyphs">40µs</text><rect x="1163" y="859" width="1" height="7" fill="#c8c8c8"/><text x="1148.43" y="879.00" font-size="14" fill="#d8d8d8" font-weight="bold" textLength="30.51" lengthAdjust="spacingAndGlyphs">45µs</text><rect x="1216" y="859" width="1" height="7" fill="#c8c8c8"/><text x="1201.32" y="879.00" font-size="14" fill="#d8d8d8" font-weight="bold" textLength="30.51" lengthAdjust="spacingAndGlyphs">50µs</text><text x="793.60" y="488.70" font-size="14" fill="#40e040" font-weight="bold" textLength="48.09" lengthAdjust="spacingAndGlyphs">V(n004)</text><text x="1068.36" y="488.90" font-size="14" fill="#58b4bc" font-weight="bold" textLength="28.13" lengthAdjust="spacingAndGlyphs">I(L1)</text><polyline points="686.80,858.50 690.80,849.95 694.80,841.42 698.80,832.92 702.80,824.45 706.80,816.00 710.80,807.58 714.80,799.18 718.80,790.81 722.80,782.47 726.80,774.15 730.80,765.85 734.80,757.58 738.80,749.34 742.80,741.12 746.80,732.92 750.80,724.76 754.80,716.61 758.80,708.49 762.80,700.40 766.80,692.33 770.80,684.28 774.80,676.26 778.80,668.27 782.80,660.29 786.80,652.35 790.80,644.42 794.80,636.52 798.80,628.65 802.80,620.80 806.80,612.97 810.80,605.17 814.80,597.39 818.80,589.63 822.80,581.90 826.80,574.19 830.80,566.51 834.80,558.84 838.80,551.21 842.80,543.59 845.50,537.50 846.50,537.50 847.50,601.00 848.50,635.00 849.50,665.00 850.50,693.00 851.50,718.00 852.50,739.00 855.00,767.50 857.00,797.50 861.90,828.00 867.30,845.00 873.00,853.00 880.50,858.50 1216.00,858.50" fill="none" stroke="#58b4bc" stroke-width="1" stroke-linejoin="miter"/><polyline points="686.50,828.50 686.50,845.50 785.00,845.50 785.00,844.50 845.50,844.50 845.50,521.00 847.50,521.00 848.50,549.00 849.50,585.00 850.50,621.00 851.50,652.00 852.50,679.00 853.50,702.00 854.50,721.00 855.50,737.00 858.80,767.50 863.70,797.50 867.00,810.00 872.70,820.00 880.00,825.50 892.50,828.50 1216.00,828.50" fill="none" stroke="#40d840" stroke-width="1" stroke-linejoin="miter"/><rect x="646" y="37" width="626" height="408" fill="#c0c0c0"/><rect x="675" y="126" width="334" height="1" fill="#0000ff"/><rect x="675" y="126" width="1" height="115" fill="#0000ff"/><rect x="675" y="268" width="1" height="137" fill="#0000ff"/><rect x="675" y="404" width="134" height="1" fill="#0000ff"/><rect x="719" y="315" width="1" height="19" fill="#0000ff"/><rect x="719" y="374" width="1" height="31" fill="#0000ff"/><rect x="719" y="315" width="62" height="1" fill="#0000ff"/><rect x="808" y="293" width="1" height="112" fill="#0000ff"/><rect x="808" y="260" width="46" height="1" fill="#0000ff"/><rect x="853" y="260" width="1" height="23" fill="#0000ff"/><rect x="853" y="282" width="12" height="1" fill="#0000ff"/><rect x="920" y="282" width="89" height="1" fill="#0000ff"/><rect x="741" y="126" width="1" height="23" fill="#0000ff"/><rect x="741" y="194" width="1" height="22" fill="#0000ff"/><rect x="741" y="215" width="157" height="1" fill="#0000ff"/><rect x="808" y="126" width="1" height="23" fill="#0000ff"/><rect x="808" y="204" width="1" height="26" fill="#0000ff"/><rect x="875" y="126" width="1" height="6" fill="#0000ff"/><rect x="875" y="175" width="1" height="41" fill="#0000ff"/><rect x="953" y="215" width="134" height="1" fill="#0000ff"/><rect x="964" y="182" width="1" height="57" fill="#0000ff"/><rect x="964" y="182" width="15" height="1" fill="#0000ff"/><rect x="994" y="182" width="15" height="1" fill="#0000ff"/><rect x="964" y="238" width="15" height="1" fill="#0000ff"/><rect x="994" y="238" width="15" height="1" fill="#0000ff"/><rect x="1008" y="126" width="1" height="179" fill="#0000ff"/><rect x="953" y="82" width="1" height="45" fill="#0000ff"/><rect x="953" y="82" width="34" height="1" fill="#0000ff"/><rect x="1042" y="82" width="34" height="1" fill="#0000ff"/><rect x="1131" y="82" width="23" height="1" fill="#0000ff"/><rect x="1153" y="82" width="1" height="123" fill="#0000ff"/><rect x="1131" y="204" width="23" height="1" fill="#0000ff"/><rect x="1064" y="82" width="1" height="112" fill="#0000ff"/><rect x="1064" y="193" width="23" height="1" fill="#0000ff"/><rect x="1064" y="126" width="43" height="1" fill="#0000ff"/><rect x="1111" y="126" width="43" height="1" fill="#0000ff"/><rect x="1108" y="171" width="1" height="23" fill="#0000ff"/><rect x="1108" y="171" width="79" height="1" fill="#0000ff"/><rect x="1186" y="115" width="1" height="57" fill="#0000ff"/><rect x="1186" y="115" width="35" height="1" fill="#0000ff"/><rect x="1220" y="115" width="1" height="15" fill="#0000ff"/><rect x="1220" y="157" width="1" height="151" fill="#0000ff"/><rect x="1220" y="226" width="34" height="1" fill="#0000ff"/><rect x="1253" y="226" width="1" height="13" fill="#0000ff"/><rect x="1108" y="216" width="1" height="145" fill="#0000ff"/><rect x="1108" y="360" width="113" height="1" fill="#0000ff"/><rect x="1220" y="335" width="1" height="26" fill="#0000ff"/><polyline points="808.50,260.50 808.50,271.50 786.50,271.50" fill="none" stroke="#000080" stroke-width="1" stroke-linejoin="miter"/><polyline points="786.50,315.50 808.50,315.50" fill="none" stroke="#000080" stroke-width="1" stroke-linejoin="miter"/><polyline points="803.50,293.50 808.50,293.50" fill="none" stroke="#000080" stroke-width="1" stroke-linejoin="miter"/><polyline points="786.50,265.00 786.50,277.00" fill="none" stroke="#000080" stroke-width="1" stroke-linejoin="miter"/><polyline points="786.50,288.00 786.50,300.00" fill="none" stroke="#000080" stroke-width="1" stroke-linejoin="miter"/><polyline points="786.50,310.00 786.50,322.00" fill="none" stroke="#000080" stroke-width="1" stroke-linejoin="miter"/><polyline points="780.50,271.00 780.50,316.00" fill="none" stroke="#000080" stroke-width="1" stroke-linejoin="miter"/><polygon points="787.00,293.50 797.00,291.50 803.50,291.50 803.50,295.50 797.00,295.50" fill="none" stroke="#000080" stroke-width="1" stroke-linejoin="miter"/><polyline points="790.00,293.50 797.00,293.50" fill="none" stroke="#000080" stroke-width="1" stroke-linejoin="miter"/><polyline points="803.50,290.00 803.50,297.00" fill="none" stroke="#000080" stroke-width="1" stroke-linejoin="miter"/><polygon points="797.50,229.50 819.50,229.50 808.50,245.50" fill="none" stroke="#000080" stroke-width="1" stroke-linejoin="miter"/><polyline points="797.50,245.50 820.50,245.50" fill="none" stroke="#000080" stroke-width="1" stroke-linejoin="miter"/><polyline points="808.50,245.50 808.50,260.00" fill="none" stroke="#000080" stroke-width="1" stroke-linejoin="miter"/><polygon points="978.50,171.50 978.50,193.50 994.50,182.50" fill="none" stroke="#000080" stroke-width="1" stroke-linejoin="miter"/><polyline points="994.50,171.50 994.50,194.50" fill="none" stroke="#000080" stroke-width="1" stroke-linejoin="miter"/><polygon points="994.50,227.50 994.50,249.50 978.50,238.50" fill="none" stroke="#000080" stroke-width="1" stroke-linejoin="miter"/><polyline points="978.50,227.50 978.50,250.50" fill="none" stroke="#000080" stroke-width="1" stroke-linejoin="miter"/><polyline points="730.00,168.50 753.00,168.50" fill="none" stroke="#000080" stroke-width="1" stroke-linejoin="miter"/><polyline points="730.00,174.50 753.00,174.50" fill="none" stroke="#000080" stroke-width="1" stroke-linejoin="miter"/><polyline points="741.50,148.00 741.50,168.50" fill="none" stroke="#000080" stroke-width="1" stroke-linejoin="miter"/><polyline points="741.50,174.50 741.50,194.00" fill="none" stroke="#000080" stroke-width="1" stroke-linejoin="miter"/><polyline points="1106.50,114.50 1106.50,138.00" fill="none" stroke="#000080" stroke-width="1" stroke-linejoin="miter"/><polyline points="1111.50,114.50 1111.50,138.00" fill="none" stroke="#000080" stroke-width="1" stroke-linejoin="miter"/><path d="M808.5 148.5 A10.8 9.2 0 0 1 808.5 167 A10.8 9.2 0 0 1 808.5 185.5 A10.8 9.2 0 0 1 808.5 204 M800.5 167 A8 2.8 0 1 0 816.5 167 A8 2.8 0 1 0 800.5 167 M800.5 185.5 A8 2.8 0 1 0 816.5 185.5 A8 2.8 0 1 0 800.5 185.5" transform="translate(0,0)" fill="none" stroke="#000080" stroke-width="1"/><polyline points="875.50,126.00 875.50,131.58 886.50,137.17 864.50,148.34 886.50,159.50 864.50,170.67 875.50,176.26 875.50,181.84" fill="none" stroke="#000080" stroke-width="1" stroke-linejoin="miter"/><polyline points="897.50,215.50 903.08,215.50 908.67,204.50 919.84,226.50 931.00,204.50 942.17,226.50 947.76,215.50 953.34,215.50" fill="none" stroke="#000080" stroke-width="1" stroke-linejoin="miter"/><polyline points="864.00,282.50 869.58,282.50 875.17,271.50 886.34,293.50 897.50,271.50 908.67,293.50 914.26,282.50 919.84,282.50" fill="none" stroke="#000080" stroke-width="1" stroke-linejoin="miter"/><polyline points="986.00,82.50 991.58,82.50 997.17,71.50 1008.34,93.50 1019.50,71.50 1030.67,93.50 1036.26,82.50 1041.84,82.50" fill="none" stroke="#000080" stroke-width="1" stroke-linejoin="miter"/><polyline points="1075.00,82.50 1080.58,82.50 1086.17,71.50 1097.34,93.50 1108.50,71.50 1119.67,93.50 1125.26,82.50 1130.84,82.50" fill="none" stroke="#000080" stroke-width="1" stroke-linejoin="miter"/><polyline points="652.00,240.50 698.00,240.50" fill="none" stroke="#000080" stroke-width="1" stroke-linejoin="miter"/><rect x="663.5" y="246.5" width="23" height="5" fill="none" stroke="#000080"/><polyline points="652.00,257.50 698.00,257.50" fill="none" stroke="#000080" stroke-width="1" stroke-linejoin="miter"/><rect x="663.5" y="263.5" width="23" height="5" fill="none" stroke="#000080"/><polyline points="1197.00,129.50 1243.00,129.50" fill="none" stroke="#000080" stroke-width="1" stroke-linejoin="miter"/><rect x="1208.5" y="135.5" width="23" height="5" fill="none" stroke="#000080"/><polyline points="1197.00,146.50 1243.00,146.50" fill="none" stroke="#000080" stroke-width="1" stroke-linejoin="miter"/><rect x="1208.5" y="152.5" width="23" height="5" fill="none" stroke="#000080"/><polyline points="1197.00,307.50 1243.00,307.50" fill="none" stroke="#000080" stroke-width="1" stroke-linejoin="miter"/><rect x="1208.5" y="313.5" width="23" height="5" fill="none" stroke="#000080"/><polyline points="1197.00,324.50 1243.00,324.50" fill="none" stroke="#000080" stroke-width="1" stroke-linejoin="miter"/><rect x="1208.5" y="330.5" width="23" height="5" fill="none" stroke="#000080"/><polyline points="660.00,232.50 667.00,232.50" fill="none" stroke="#000080" stroke-width="1" stroke-linejoin="miter"/><polyline points="663.50,229.00 663.50,236.00" fill="none" stroke="#000080" stroke-width="1" stroke-linejoin="miter"/><polyline points="1206.00,121.50 1213.00,121.50" fill="none" stroke="#000080" stroke-width="1" stroke-linejoin="miter"/><polyline points="1209.50,118.00 1209.50,125.00" fill="none" stroke="#000080" stroke-width="1" stroke-linejoin="miter"/><polyline points="1205.00,299.50 1212.00,299.50" fill="none" stroke="#000080" stroke-width="1" stroke-linejoin="miter"/><polyline points="1208.50,296.00 1208.50,303.00" fill="none" stroke="#000080" stroke-width="1" stroke-linejoin="miter"/><circle cx="719.5" cy="353.7" r="21" fill="none" stroke="#000080"/><polyline points="716.00,338.50 723.00,338.50" fill="none" stroke="#000080" stroke-width="1" stroke-linejoin="miter"/><polyline points="719.50,335.00 719.50,342.00" fill="none" stroke="#000080" stroke-width="1" stroke-linejoin="miter"/><polyline points="716.00,371.50 723.00,371.50" fill="none" stroke="#000080" stroke-width="1" stroke-linejoin="miter"/><path d="M702.5 354.5 C704 344 716 342 719.5 354 C723 366 735 364 736.5 354" fill="none" stroke="#000080" stroke-width="1.3"/><polygon points="1086.50,182.50 1086.50,226.50 1131.50,204.50" fill="none" stroke="#000080" stroke-width="1" stroke-linejoin="miter"/><polyline points="1091.00,193.50 1097.00,193.50" fill="none" stroke="#000080" stroke-width="1" stroke-linejoin="miter"/><polyline points="1090.00,215.50 1097.00,215.50" fill="none" stroke="#000080" stroke-width="1" stroke-linejoin="miter"/><polyline points="1093.50,212.00 1093.50,219.00" fill="none" stroke="#000080" stroke-width="1" stroke-linejoin="miter"/><polyline points="1111.00,191.50 1118.00,191.50" fill="none" stroke="#000080" stroke-width="1" stroke-linejoin="miter"/><polyline points="1114.50,188.00 1114.50,195.00" fill="none" stroke="#000080" stroke-width="1" stroke-linejoin="miter"/><polyline points="1112.00,218.50 1119.00,218.50" fill="none" stroke="#000080" stroke-width="1" stroke-linejoin="miter"/><polygon points="996.50,304.50 1020.50,304.50 1008.50,317.00" fill="none" stroke="#000080" stroke-width="1" stroke-linejoin="miter"/><polygon points="1241.50,238.50 1265.50,238.50 1253.50,251.00" fill="none" stroke="#000080" stroke-width="1" stroke-linejoin="miter"/><rect x="738" y="123" width="7" height="7" fill="#0000ff"/><rect x="805" y="123" width="7" height="7" fill="#0000ff"/><rect x="872" y="123" width="7" height="7" fill="#0000ff"/><rect x="950" y="123" width="7" height="7" fill="#0000ff"/><rect x="805" y="212" width="7" height="7" fill="#0000ff"/><rect x="872" y="212" width="7" height="7" fill="#0000ff"/><rect x="961" y="212" width="7" height="7" fill="#0000ff"/><rect x="1005" y="179" width="7" height="7" fill="#0000ff"/><rect x="1005" y="235" width="7" height="7" fill="#0000ff"/><rect x="1005" y="279" width="7" height="7" fill="#0000ff"/><rect x="1061" y="79" width="7" height="7" fill="#0000ff"/><rect x="1061" y="123" width="7" height="7" fill="#0000ff"/><rect x="1150" y="123" width="7" height="7" fill="#0000ff"/><rect x="1217" y="223" width="7" height="7" fill="#0000ff"/><rect x="805" y="257" width="7" height="7" fill="#0000ff"/><rect x="716" y="401" width="7" height="7" fill="#0000ff"/><text x="747.34" y="159.70" font-size="16" fill="#000" font-weight="bold" textLength="18.60" lengthAdjust="spacingAndGlyphs">C1</text><text x="746.39" y="193.60" font-size="16" fill="#000" font-weight="bold" textLength="27.96" lengthAdjust="spacingAndGlyphs">84p</text><text x="821.63" y="170.60" font-size="16" fill="#000" font-weight="bold" textLength="17.02" lengthAdjust="spacingAndGlyphs">L1</text><text x="821.43" y="198.50" font-size="16" fill="#000" font-weight="bold" textLength="36.93" lengthAdjust="spacingAndGlyphs">300µ</text><text x="888.53" y="148.60" font-size="16" fill="#000" font-weight="bold" textLength="20.92" lengthAdjust="spacingAndGlyphs">R5</text><text x="888.49" y="173.50" font-size="16" fill="#000" font-weight="bold" textLength="27.16" lengthAdjust="spacingAndGlyphs">850</text><text x="913.93" y="199.50" font-size="16" fill="#000" font-weight="bold" textLength="20.85" lengthAdjust="spacingAndGlyphs">R3</text><text x="915.79" y="240.70" font-size="16" fill="#000" font-weight="bold" textLength="17.39" lengthAdjust="spacingAndGlyphs">1k</text><text x="974.93" y="166.70" font-size="16" fill="#000" font-weight="bold" textLength="20.61" lengthAdjust="spacingAndGlyphs">D2</text><text x="957.19" y="207.70" font-size="16" fill="#000" font-weight="bold" textLength="56.30" lengthAdjust="spacingAndGlyphs">1N4148</text><text x="956.89" y="263.60" font-size="16" fill="#000" font-weight="bold" textLength="56.60" lengthAdjust="spacingAndGlyphs">1N4148</text><text x="976.93" y="279.40" font-size="16" fill="#000" font-weight="bold" textLength="19.32" lengthAdjust="spacingAndGlyphs">D1</text><text x="1002.68" y="66.50" font-size="16" fill="#000" font-weight="bold" textLength="20.51" lengthAdjust="spacingAndGlyphs">R4</text><text x="995.89" y="107.50" font-size="16" fill="#000" font-weight="bold" textLength="36.01" lengthAdjust="spacingAndGlyphs">1000</text><text x="1091.43" y="66.50" font-size="16" fill="#000" font-weight="bold" textLength="21.11" lengthAdjust="spacingAndGlyphs">R2</text><text x="1071.49" y="107.00" font-size="16" fill="#000" font-weight="bold" textLength="26.59" lengthAdjust="spacingAndGlyphs">10k</text><text x="1118.09" y="119.40" font-size="16" fill="#000" font-weight="bold" textLength="20.65" lengthAdjust="spacingAndGlyphs">C2</text><text x="1097.20" y="151.25" font-size="16" fill="#000" font-weight="bold" textLength="19.46" lengthAdjust="spacingAndGlyphs">2p</text><text x="1119.94" y="187.90" font-size="16" fill="#000" font-weight="bold" textLength="19.11" lengthAdjust="spacingAndGlyphs">U1</text><text x="1119.93" y="231.70" font-size="16" fill="#000" font-weight="bold" textLength="55.47" lengthAdjust="spacingAndGlyphs">LT6237</text><text x="1236.14" y="121.00" font-size="16" fill="#000" font-weight="bold" textLength="19.50" lengthAdjust="spacingAndGlyphs">V2</text><text x="1234.45" y="182.00" font-size="16" fill="#000" font-weight="bold" textLength="23.00" lengthAdjust="spacingAndGlyphs">2.5</text><text x="1235.89" y="299.00" font-size="16" fill="#000" font-weight="bold" textLength="19.69" lengthAdjust="spacingAndGlyphs">V3</text><text x="1234.45" y="359.50" font-size="16" fill="#000" font-weight="bold" textLength="23.00" lengthAdjust="spacingAndGlyphs">2.5</text><text x="691.19" y="231.60" font-size="16" fill="#000" font-weight="bold" textLength="18.80" lengthAdjust="spacingAndGlyphs">V4</text><text x="691.19" y="293.20" font-size="16" fill="#000" font-weight="bold" textLength="17.45" lengthAdjust="spacingAndGlyphs">12</text><text x="734.73" y="243.60" font-size="16" fill="#000" font-weight="bold" textLength="63.93" lengthAdjust="spacingAndGlyphs">MUR460</text><text x="822.63" y="236.60" font-size="16" fill="#000" font-weight="bold" textLength="20.82" lengthAdjust="spacingAndGlyphs">D5</text><text x="880.18" y="266.50" font-size="16" fill="#000" font-weight="bold" textLength="20.27" lengthAdjust="spacingAndGlyphs">R1</text><text x="865.49" y="307.40" font-size="16" fill="#000" font-weight="bold" textLength="51.78" lengthAdjust="spacingAndGlyphs">10meg</text><text x="813.63" y="287.60" font-size="16" fill="#000" font-weight="bold" textLength="20.32" lengthAdjust="spacingAndGlyphs">M1</text><text x="814.74" y="328.40" font-size="16" fill="#000" font-weight="bold" textLength="101.04" lengthAdjust="spacingAndGlyphs">SPA11N60C3</text><text x="736.59" y="331.50" font-size="16" fill="#000" font-weight="bold" textLength="17.45" lengthAdjust="spacingAndGlyphs">V1</text><text x="734.93" y="393.75" font-size="16" fill="#000" font-weight="bold" textLength="184.62" lengthAdjust="spacingAndGlyphs">PULSE(0 6 0 0 0 15u 0 1)</text><text x="696.41" y="426.50" font-size="16" fill="#000" font-weight="bold" textLength="92.24" lengthAdjust="spacingAndGlyphs">.tran 0 50u 0</text><rect x="8" y="476" width="626" height="408" fill="#c0c0c0"/><rect x="37" y="565" width="334" height="1" fill="#0000ff"/><rect x="37" y="565" width="1" height="115" fill="#0000ff"/><rect x="37" y="707" width="1" height="137" fill="#0000ff"/><rect x="37" y="843" width="134" height="1" fill="#0000ff"/><rect x="81" y="754" width="1" height="19" fill="#0000ff"/><rect x="81" y="813" width="1" height="31" fill="#0000ff"/><rect x="81" y="754" width="62" height="1" fill="#0000ff"/><rect x="170" y="732" width="1" height="112" fill="#0000ff"/><rect x="170" y="699" width="46" height="1" fill="#0000ff"/><rect x="215" y="699" width="1" height="23" fill="#0000ff"/><rect x="215" y="721" width="12" height="1" fill="#0000ff"/><rect x="282" y="721" width="89" height="1" fill="#0000ff"/><rect x="103" y="565" width="1" height="23" fill="#0000ff"/><rect x="103" y="633" width="1" height="22" fill="#0000ff"/><rect x="103" y="654" width="157" height="1" fill="#0000ff"/><rect x="170" y="565" width="1" height="23" fill="#0000ff"/><rect x="170" y="643" width="1" height="26" fill="#0000ff"/><rect x="237" y="565" width="1" height="6" fill="#0000ff"/><rect x="237" y="614" width="1" height="41" fill="#0000ff"/><rect x="315" y="654" width="134" height="1" fill="#0000ff"/><rect x="326" y="621" width="1" height="57" fill="#0000ff"/><rect x="326" y="621" width="15" height="1" fill="#0000ff"/><rect x="356" y="621" width="15" height="1" fill="#0000ff"/><rect x="326" y="677" width="15" height="1" fill="#0000ff"/><rect x="356" y="677" width="15" height="1" fill="#0000ff"/><rect x="370" y="565" width="1" height="179" fill="#0000ff"/><rect x="315" y="521" width="1" height="45" fill="#0000ff"/><rect x="315" y="521" width="34" height="1" fill="#0000ff"/><rect x="404" y="521" width="34" height="1" fill="#0000ff"/><rect x="493" y="521" width="23" height="1" fill="#0000ff"/><rect x="515" y="521" width="1" height="123" fill="#0000ff"/><rect x="493" y="643" width="23" height="1" fill="#0000ff"/><rect x="426" y="521" width="1" height="112" fill="#0000ff"/><rect x="426" y="632" width="23" height="1" fill="#0000ff"/><rect x="426" y="565" width="43" height="1" fill="#0000ff"/><rect x="473" y="565" width="43" height="1" fill="#0000ff"/><rect x="470" y="610" width="1" height="23" fill="#0000ff"/><rect x="470" y="610" width="79" height="1" fill="#0000ff"/><rect x="548" y="554" width="1" height="57" fill="#0000ff"/><rect x="548" y="554" width="35" height="1" fill="#0000ff"/><rect x="582" y="554" width="1" height="15" fill="#0000ff"/><rect x="582" y="596" width="1" height="151" fill="#0000ff"/><rect x="582" y="665" width="34" height="1" fill="#0000ff"/><rect x="615" y="665" width="1" height="13" fill="#0000ff"/><rect x="470" y="655" width="1" height="145" fill="#0000ff"/><rect x="470" y="799" width="113" height="1" fill="#0000ff"/><rect x="582" y="774" width="1" height="26" fill="#0000ff"/><polyline points="170.50,699.50 170.50,710.50 148.50,710.50" fill="none" stroke="#000080" stroke-width="1" stroke-linejoin="miter"/><polyline points="148.50,754.50 170.50,754.50" fill="none" stroke="#000080" stroke-width="1" stroke-linejoin="miter"/><polyline points="165.50,732.50 170.50,732.50" fill="none" stroke="#000080" stroke-width="1" stroke-linejoin="miter"/><polyline points="148.50,704.00 148.50,716.00" fill="none" stroke="#000080" stroke-width="1" stroke-linejoin="miter"/><polyline points="148.50,727.00 148.50,739.00" fill="none" stroke="#000080" stroke-width="1" stroke-linejoin="miter"/><polyline points="148.50,749.00 148.50,761.00" fill="none" stroke="#000080" stroke-width="1" stroke-linejoin="miter"/><polyline points="142.50,710.00 142.50,755.00" fill="none" stroke="#000080" stroke-width="1" stroke-linejoin="miter"/><polygon points="149.00,732.50 159.00,730.50 165.50,730.50 165.50,734.50 159.00,734.50" fill="none" stroke="#000080" stroke-width="1" stroke-linejoin="miter"/><polyline points="152.00,732.50 159.00,732.50" fill="none" stroke="#000080" stroke-width="1" stroke-linejoin="miter"/><polyline points="165.50,729.00 165.50,736.00" fill="none" stroke="#000080" stroke-width="1" stroke-linejoin="miter"/><polygon points="159.50,668.50 181.50,668.50 170.50,684.50" fill="none" stroke="#000080" stroke-width="1" stroke-linejoin="miter"/><polyline points="159.50,684.50 182.50,684.50" fill="none" stroke="#000080" stroke-width="1" stroke-linejoin="miter"/><polyline points="170.50,684.50 170.50,699.00" fill="none" stroke="#000080" stroke-width="1" stroke-linejoin="miter"/><polygon points="340.50,610.50 340.50,632.50 356.50,621.50" fill="none" stroke="#000080" stroke-width="1" stroke-linejoin="miter"/><polyline points="356.50,610.50 356.50,633.50" fill="none" stroke="#000080" stroke-width="1" stroke-linejoin="miter"/><polygon points="356.50,666.50 356.50,688.50 340.50,677.50" fill="none" stroke="#000080" stroke-width="1" stroke-linejoin="miter"/><polyline points="340.50,666.50 340.50,689.50" fill="none" stroke="#000080" stroke-width="1" stroke-linejoin="miter"/><polyline points="92.00,607.50 115.00,607.50" fill="none" stroke="#000080" stroke-width="1" stroke-linejoin="miter"/><polyline points="92.00,613.50 115.00,613.50" fill="none" stroke="#000080" stroke-width="1" stroke-linejoin="miter"/><polyline points="103.50,587.00 103.50,607.50" fill="none" stroke="#000080" stroke-width="1" stroke-linejoin="miter"/><polyline points="103.50,613.50 103.50,633.00" fill="none" stroke="#000080" stroke-width="1" stroke-linejoin="miter"/><polyline points="468.50,553.50 468.50,577.00" fill="none" stroke="#000080" stroke-width="1" stroke-linejoin="miter"/><polyline points="473.50,553.50 473.50,577.00" fill="none" stroke="#000080" stroke-width="1" stroke-linejoin="miter"/><path d="M808.5 148.5 A10.8 9.2 0 0 1 808.5 167 A10.8 9.2 0 0 1 808.5 185.5 A10.8 9.2 0 0 1 808.5 204 M800.5 167 A8 2.8 0 1 0 816.5 167 A8 2.8 0 1 0 800.5 167 M800.5 185.5 A8 2.8 0 1 0 816.5 185.5 A8 2.8 0 1 0 800.5 185.5" transform="translate(-638,439)" fill="none" stroke="#000080" stroke-width="1"/><polyline points="237.50,565.00 237.50,570.58 248.50,576.17 226.50,587.34 248.50,598.50 226.50,609.67 237.50,615.26 237.50,620.84" fill="none" stroke="#000080" stroke-width="1" stroke-linejoin="miter"/><polyline points="259.50,654.50 265.08,654.50 270.67,643.50 281.84,665.50 293.00,643.50 304.17,665.50 309.76,654.50 315.34,654.50" fill="none" stroke="#000080" stroke-width="1" stroke-linejoin="miter"/><polyline points="226.00,721.50 231.58,721.50 237.17,710.50 248.34,732.50 259.50,710.50 270.67,732.50 276.26,721.50 281.84,721.50" fill="none" stroke="#000080" stroke-width="1" stroke-linejoin="miter"/><polyline points="348.00,521.50 353.58,521.50 359.17,510.50 370.34,532.50 381.50,510.50 392.67,532.50 398.26,521.50 403.84,521.50" fill="none" stroke="#000080" stroke-width="1" stroke-linejoin="miter"/><polyline points="437.00,521.50 442.58,521.50 448.17,510.50 459.34,532.50 470.50,510.50 481.67,532.50 487.26,521.50 492.84,521.50" fill="none" stroke="#000080" stroke-width="1" stroke-linejoin="miter"/><polyline points="14.00,679.50 60.00,679.50" fill="none" stroke="#000080" stroke-width="1" stroke-linejoin="miter"/><rect x="25.5" y="685.5" width="23" height="5" fill="none" stroke="#000080"/><polyline points="14.00,696.50 60.00,696.50" fill="none" stroke="#000080" stroke-width="1" stroke-linejoin="miter"/><rect x="25.5" y="702.5" width="23" height="5" fill="none" stroke="#000080"/><polyline points="559.00,568.50 605.00,568.50" fill="none" stroke="#000080" stroke-width="1" stroke-linejoin="miter"/><rect x="570.5" y="574.5" width="23" height="5" fill="none" stroke="#000080"/><polyline points="559.00,585.50 605.00,585.50" fill="none" stroke="#000080" stroke-width="1" stroke-linejoin="miter"/><rect x="570.5" y="591.5" width="23" height="5" fill="none" stroke="#000080"/><polyline points="559.00,746.50 605.00,746.50" fill="none" stroke="#000080" stroke-width="1" stroke-linejoin="miter"/><rect x="570.5" y="752.5" width="23" height="5" fill="none" stroke="#000080"/><polyline points="559.00,763.50 605.00,763.50" fill="none" stroke="#000080" stroke-width="1" stroke-linejoin="miter"/><rect x="570.5" y="769.5" width="23" height="5" fill="none" stroke="#000080"/><polyline points="22.00,671.50 29.00,671.50" fill="none" stroke="#000080" stroke-width="1" stroke-linejoin="miter"/><polyline points="25.50,668.00 25.50,675.00" fill="none" stroke="#000080" stroke-width="1" stroke-linejoin="miter"/><polyline points="568.00,560.50 575.00,560.50" fill="none" stroke="#000080" stroke-width="1" stroke-linejoin="miter"/><polyline points="571.50,557.00 571.50,564.00" fill="none" stroke="#000080" stroke-width="1" stroke-linejoin="miter"/><polyline points="567.00,738.50 574.00,738.50" fill="none" stroke="#000080" stroke-width="1" stroke-linejoin="miter"/><polyline points="570.50,735.00 570.50,742.00" fill="none" stroke="#000080" stroke-width="1" stroke-linejoin="miter"/><circle cx="81.5" cy="792.7" r="21" fill="none" stroke="#000080"/><polyline points="78.00,777.50 85.00,777.50" fill="none" stroke="#000080" stroke-width="1" stroke-linejoin="miter"/><polyline points="81.50,774.00 81.50,781.00" fill="none" stroke="#000080" stroke-width="1" stroke-linejoin="miter"/><polyline points="78.00,810.50 85.00,810.50" fill="none" stroke="#000080" stroke-width="1" stroke-linejoin="miter"/><path d="M64.5 793.5 C66 783 78 781 81.5 793 C85 805 97 803 98.5 793" fill="none" stroke="#000080" stroke-width="1.3"/><polygon points="448.50,621.50 448.50,665.50 493.50,643.50" fill="none" stroke="#000080" stroke-width="1" stroke-linejoin="miter"/><polyline points="453.00,632.50 459.00,632.50" fill="none" stroke="#000080" stroke-width="1" stroke-linejoin="miter"/><polyline points="452.00,654.50 459.00,654.50" fill="none" stroke="#000080" stroke-width="1" stroke-linejoin="miter"/><polyline points="455.50,651.00 455.50,658.00" fill="none" stroke="#000080" stroke-width="1" stroke-linejoin="miter"/><polyline points="473.00,630.50 480.00,630.50" fill="none" stroke="#000080" stroke-width="1" stroke-linejoin="miter"/><polyline points="476.50,627.00 476.50,634.00" fill="none" stroke="#000080" stroke-width="1" stroke-linejoin="miter"/><polyline points="474.00,657.50 481.00,657.50" fill="none" stroke="#000080" stroke-width="1" stroke-linejoin="miter"/><polygon points="358.50,743.50 382.50,743.50 370.50,756.00" fill="none" stroke="#000080" stroke-width="1" stroke-linejoin="miter"/><polygon points="603.50,677.50 627.50,677.50 615.50,690.00" fill="none" stroke="#000080" stroke-width="1" stroke-linejoin="miter"/><rect x="100" y="562" width="7" height="7" fill="#0000ff"/><rect x="167" y="562" width="7" height="7" fill="#0000ff"/><rect x="234" y="562" width="7" height="7" fill="#0000ff"/><rect x="312" y="562" width="7" height="7" fill="#0000ff"/><rect x="167" y="651" width="7" height="7" fill="#0000ff"/><rect x="234" y="651" width="7" height="7" fill="#0000ff"/><rect x="323" y="651" width="7" height="7" fill="#0000ff"/><rect x="367" y="618" width="7" height="7" fill="#0000ff"/><rect x="367" y="674" width="7" height="7" fill="#0000ff"/><rect x="367" y="718" width="7" height="7" fill="#0000ff"/><rect x="423" y="518" width="7" height="7" fill="#0000ff"/><rect x="423" y="562" width="7" height="7" fill="#0000ff"/><rect x="512" y="562" width="7" height="7" fill="#0000ff"/><rect x="579" y="662" width="7" height="7" fill="#0000ff"/><rect x="167" y="696" width="7" height="7" fill="#0000ff"/><rect x="78" y="840" width="7" height="7" fill="#0000ff"/><text x="109.34" y="598.70" font-size="16" fill="#000" font-weight="bold" textLength="18.60" lengthAdjust="spacingAndGlyphs">C1</text><text x="108.39" y="632.60" font-size="16" fill="#000" font-weight="bold" textLength="27.96" lengthAdjust="spacingAndGlyphs">84p</text><text x="183.63" y="609.60" font-size="16" fill="#000" font-weight="bold" textLength="17.02" lengthAdjust="spacingAndGlyphs">L1</text><text x="183.43" y="637.50" font-size="16" fill="#000" font-weight="bold" textLength="36.93" lengthAdjust="spacingAndGlyphs">300µ</text><text x="250.53" y="587.60" font-size="16" fill="#000" font-weight="bold" textLength="20.92" lengthAdjust="spacingAndGlyphs">R5</text><text x="250.49" y="612.50" font-size="16" fill="#000" font-weight="bold" textLength="27.16" lengthAdjust="spacingAndGlyphs">850</text><text x="275.93" y="638.50" font-size="16" fill="#000" font-weight="bold" textLength="20.85" lengthAdjust="spacingAndGlyphs">R3</text><text x="277.79" y="679.70" font-size="16" fill="#000" font-weight="bold" textLength="17.39" lengthAdjust="spacingAndGlyphs">1k</text><text x="336.93" y="605.70" font-size="16" fill="#000" font-weight="bold" textLength="20.61" lengthAdjust="spacingAndGlyphs">D2</text><text x="319.19" y="646.70" font-size="16" fill="#000" font-weight="bold" textLength="56.30" lengthAdjust="spacingAndGlyphs">1N4148</text><text x="318.89" y="702.60" font-size="16" fill="#000" font-weight="bold" textLength="56.60" lengthAdjust="spacingAndGlyphs">1N4148</text><text x="338.93" y="718.40" font-size="16" fill="#000" font-weight="bold" textLength="19.32" lengthAdjust="spacingAndGlyphs">D1</text><text x="364.68" y="505.50" font-size="16" fill="#000" font-weight="bold" textLength="20.51" lengthAdjust="spacingAndGlyphs">R4</text><text x="357.89" y="546.50" font-size="16" fill="#000" font-weight="bold" textLength="36.01" lengthAdjust="spacingAndGlyphs">1000</text><text x="453.43" y="505.50" font-size="16" fill="#000" font-weight="bold" textLength="21.11" lengthAdjust="spacingAndGlyphs">R2</text><text x="433.49" y="546.00" font-size="16" fill="#000" font-weight="bold" textLength="26.59" lengthAdjust="spacingAndGlyphs">10k</text><text x="480.09" y="558.40" font-size="16" fill="#000" font-weight="bold" textLength="20.65" lengthAdjust="spacingAndGlyphs">C2</text><text x="459.20" y="590.25" font-size="16" fill="#000" font-weight="bold" textLength="19.46" lengthAdjust="spacingAndGlyphs">2p</text><text x="481.94" y="626.90" font-size="16" fill="#000" font-weight="bold" textLength="19.11" lengthAdjust="spacingAndGlyphs">U1</text><text x="481.93" y="670.70" font-size="16" fill="#000" font-weight="bold" textLength="55.47" lengthAdjust="spacingAndGlyphs">LT6237</text><text x="598.14" y="560.00" font-size="16" fill="#000" font-weight="bold" textLength="19.50" lengthAdjust="spacingAndGlyphs">V2</text><text x="596.45" y="621.00" font-size="16" fill="#000" font-weight="bold" textLength="23.00" lengthAdjust="spacingAndGlyphs">2.5</text><text x="597.89" y="738.00" font-size="16" fill="#000" font-weight="bold" textLength="19.69" lengthAdjust="spacingAndGlyphs">V3</text><text x="596.45" y="798.50" font-size="16" fill="#000" font-weight="bold" textLength="23.00" lengthAdjust="spacingAndGlyphs">2.5</text><text x="53.19" y="670.60" font-size="16" fill="#000" font-weight="bold" textLength="18.80" lengthAdjust="spacingAndGlyphs">V4</text><text x="53.19" y="732.20" font-size="16" fill="#000" font-weight="bold" textLength="17.45" lengthAdjust="spacingAndGlyphs">12</text><text x="96.73" y="682.60" font-size="16" fill="#000" font-weight="bold" textLength="63.93" lengthAdjust="spacingAndGlyphs">MUR460</text><text x="184.63" y="675.60" font-size="16" fill="#000" font-weight="bold" textLength="20.82" lengthAdjust="spacingAndGlyphs">D5</text><text x="242.18" y="705.50" font-size="16" fill="#000" font-weight="bold" textLength="20.27" lengthAdjust="spacingAndGlyphs">R1</text><text x="227.49" y="746.40" font-size="16" fill="#000" font-weight="bold" textLength="51.78" lengthAdjust="spacingAndGlyphs">10meg</text><text x="175.63" y="726.60" font-size="16" fill="#000" font-weight="bold" textLength="20.32" lengthAdjust="spacingAndGlyphs">M1</text><text x="176.74" y="767.40" font-size="16" fill="#000" font-weight="bold" textLength="101.04" lengthAdjust="spacingAndGlyphs">SPA11N60C3</text><text x="98.59" y="770.50" font-size="16" fill="#000" font-weight="bold" textLength="17.45" lengthAdjust="spacingAndGlyphs">V1</text><text x="96.93" y="832.75" font-size="16" fill="#000" font-weight="bold" textLength="184.62" lengthAdjust="spacingAndGlyphs">PULSE(0 6 0 0 0 30u 0 1)</text><text x="58.41" y="865.50" font-size="16" fill="#000" font-weight="bold" textLength="92.24" lengthAdjust="spacingAndGlyphs">.tran 0 50u 0</text><rect x="0" y="890" width="1280" height="1" fill="#d4d0c8"/><rect x="0" y="891" width="1280" height="1" fill="#ffffff"/><text x="2" y="907" font-size="11" fill="#000">x = 48.26µs</text><text x="73" y="907" font-size="11" fill="#000">y = -3.74V, 0.091A</text><rect x="1229" y="895" width="51" height="1" fill="#808080"/><rect x="1229" y="895" width="1" height="15" fill="#808080"/><rect x="1229" y="910" width="51" height="1" fill="#ffffff"/><rect x="0" y="913" width="1280" height="1" fill="#ffffff"/></svg></div></body></html>
